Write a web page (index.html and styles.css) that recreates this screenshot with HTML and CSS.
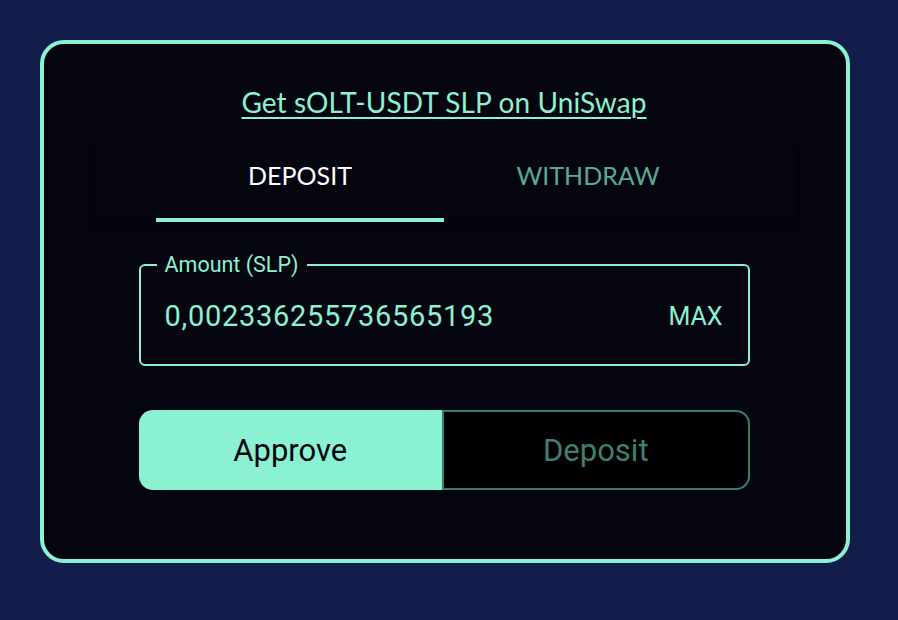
FILE: index.html
```html
<!DOCTYPE html>
<html lang="en">
<head>
<meta charset="utf-8">
<title>Deposit SLP</title>
<link rel="stylesheet" href="styles.css">
</head>
<body>
<main class="card">
  <a class="pool-link" href="#">Get sOLT-USDT SLP on UniSwap</a>
  <div class="tabs">
    <button class="tab tab-active">DEPOSIT</button>
    <button class="tab">WITHDRAW</button>
  </div>
  <fieldset class="amount-field">
    <legend class="amount-label">Amount (SLP)</legend>
    <div class="amount-row">
      <span class="amount-value">0,002336255736565193</span>
      <button class="max-btn">MAX</button>
    </div>
  </fieldset>
  <div class="actions">
    <button class="btn btn-approve">Approve</button>
    <button class="btn btn-deposit">Deposit</button>
  </div>
</main>
</body>
</html>
```
FILE: styles.css
```css
html, body {
  margin: 0;
  padding: 0;
}
body {
  background: #131d4b;
  min-height: 620px;
  padding-top: 40px;
  box-sizing: border-box;
  font-family: Roboto, "Liberation Sans", sans-serif;
}
.card {
  box-sizing: border-box;
  width: 810px;
  height: 523px;
  margin-left: 40px;
  border: 4px solid #8af2d2;
  border-radius: 24px;
  background: #05050f;
  display: flex;
  flex-direction: column;
  align-items: center;
  padding: 42px 2px 0 0;
}
.pool-link {
  font-family: Lato, "Open Sans", sans-serif;
  font-weight: 400;
  font-size: 28px;
  line-height: 32px;
  letter-spacing: 0.1px;
  color: #8af2d2;
  text-decoration: underline;
  text-decoration-thickness: 2px;
  text-underline-offset: 4px;
}
.tabs {
  width: 705px;
  height: 76px;
  margin-top: 28px;
  display: flex;
  justify-content: center;
  box-shadow: 0 2px 3px -1px rgba(0,0,0,.35), 0 1px 4px rgba(0,0,0,.2);
}
.tab {
  box-sizing: border-box;
  width: 288px;
  height: 76px;
  background: none;
  border: 0;
  border-bottom: 4px solid transparent;
  padding: 15px 0 0;
  display: flex;
  justify-content: center;
  align-items: flex-start;
  font-family: Lato, "Open Sans", sans-serif;
  font-size: 25px;
  line-height: 28px;
  color: #5aa892;
  cursor: pointer;
}
.tab-active {
  color: #ffffff;
  border-bottom-color: #8af2d2;
}
.amount-field {
  box-sizing: border-box;
  width: 611px;
  margin: 32px 0 0;
  padding: 0 25px 8px 24px;
  border: 2px solid #8af2d2;
  border-radius: 6px;
}
.amount-label {
  margin-left: -8px;
  padding: 0 8px;
  font-size: 21.5px;
  line-height: 22px;
  color: #8af2d2;
}
.amount-row {
  height: 80px;
  display: flex;
  align-items: center;
  justify-content: space-between;
}
.amount-value {
  font-size: 29px;
  letter-spacing: 0.7px;
  color: #8af2d2;
}
.max-btn {
  background: none;
  border: 0;
  padding: 0;
  font-family: Roboto, "Liberation Sans", sans-serif;
  font-size: 25px;
  color: #8af2d2;
}
.actions {
  width: 611px;
  height: 80px;
  margin-top: 44px;
  display: flex;
}
.btn {
  flex: 1;
  box-sizing: border-box;
  font-family: Roboto, "Liberation Sans", sans-serif;
  font-size: 31px;
  cursor: pointer;
}
.btn-approve {
  background: #8af2d2;
  color: #05050f;
  border: 0;
  border-radius: 14px 0 0 14px;
}
.btn-deposit {
  background: #010104;
  color: #3f7f6d;
  border: 2px solid #3d7b6a;
  border-radius: 0 14px 14px 0;
}
```
